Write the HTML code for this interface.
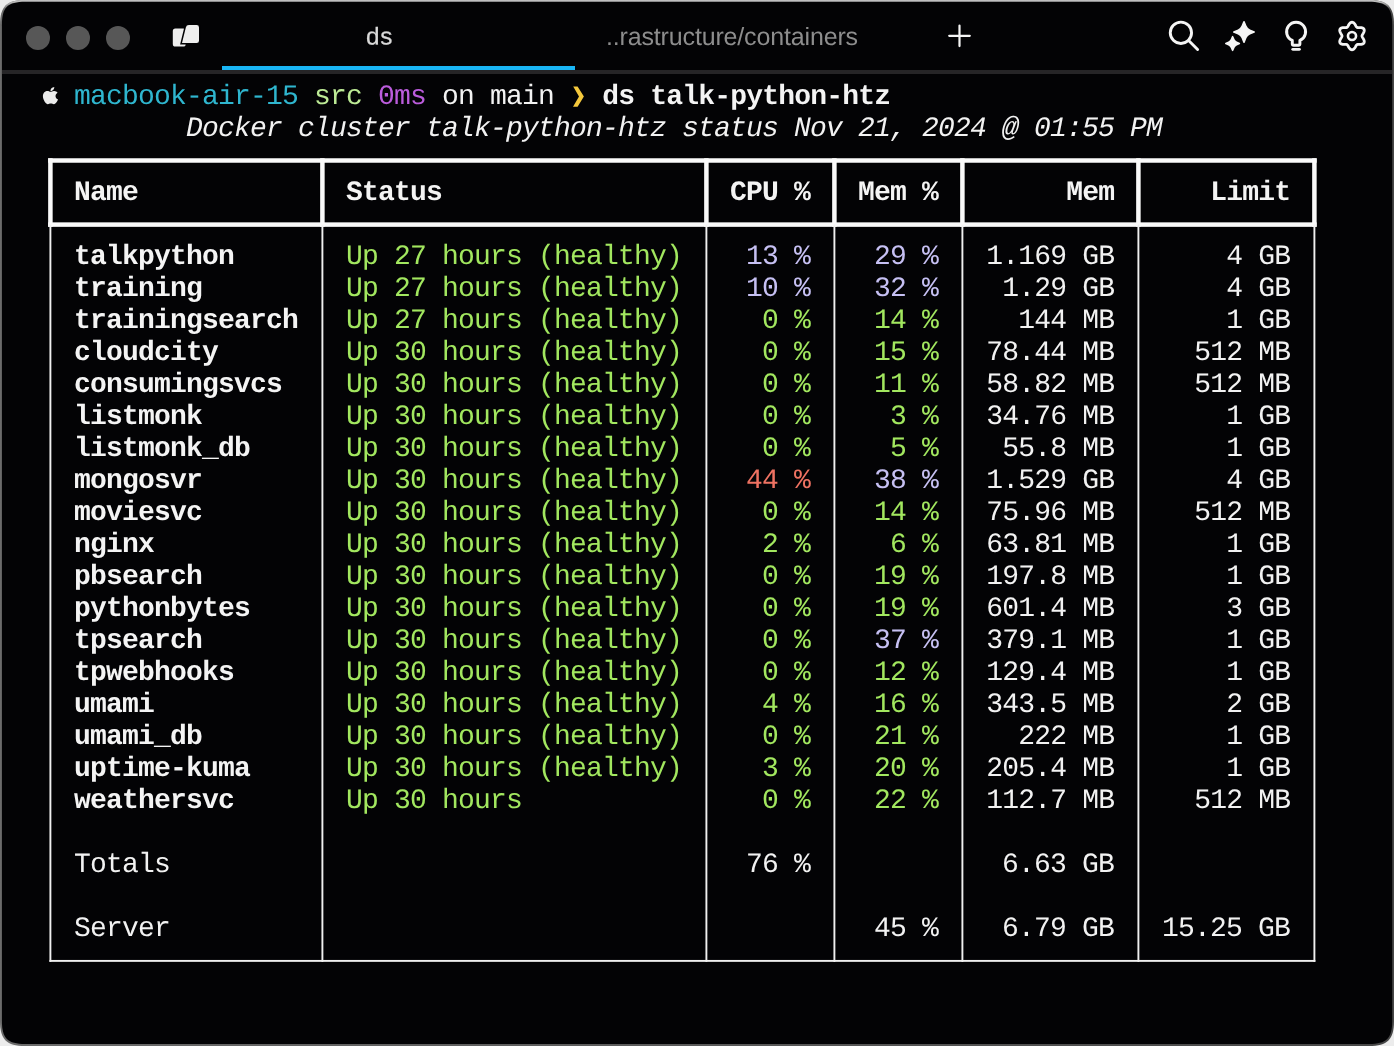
<!DOCTYPE html>
<html><head><meta charset="utf-8"><title>ds</title>
<style>
html,body{margin:0;padding:0;}
body{width:1394px;height:1046px;overflow:hidden;background:#ececec;position:relative;font-family:"Liberation Sans",sans-serif;}
.abs{position:absolute;}
.divider{left:2px;top:70px;width:1390px;height:4px;background:#262527;}
.blue{left:222px;top:66px;width:353px;height:4px;background:#19b6f6;}
.tl{width:24.4px;height:24.4px;border-radius:50%;background:#575757;top:25.8px;}
.tab1{left:279px;width:200px;top:23px;text-align:center;font-size:24.6px;line-height:28px;color:#dadada;letter-spacing:-0.3px;transform:translateZ(0);text-rendering:geometricPrecision;-webkit-text-stroke:0.25px #dadada;}
.tab2{left:606px;top:23px;font-size:25px;line-height:28px;color:#8d8d8d;white-space:nowrap;letter-spacing:-0.157px;transform:translateZ(0);text-rendering:geometricPrecision;}
pre{position:absolute;left:42px;top:82px;margin:0;font-family:"Liberation Mono",monospace;font-size:28px;letter-spacing:-0.8027px;line-height:32px;color:#f2f2f2;white-space:pre;transform:translateZ(0);text-rendering:geometricPrecision;}
pre b{font-weight:bold;color:#f4f4f4;}
pre i{font-style:italic;}
.c{color:#2fb6cf;}
.g2{color:#bdeb96;}
.m{color:#bb5cdc;}
.y{color:#f1b62e;}
.g{color:#a2e75f;}
.p{color:#c6c0f3;}
.r{color:#ee7262;}
svg{position:absolute;left:0;top:0;}
</style></head>
<body>
<svg class="winsvg" width="1394" height="1046" viewBox="0 0 1394 1046">
<defs>
<linearGradient id="gb" x1="0" y1="0" x2="1" y2="0"><stop offset="0" stop-color="#6c6c6c"/><stop offset="1" stop-color="#474747"/></linearGradient>
<linearGradient id="gt" gradientUnits="userSpaceOnUse" x1="0" y1="0" x2="0" y2="9"><stop offset="0" stop-color="#c2c2c2"/><stop offset="0.25" stop-color="#b8b8b8"/><stop offset="1" stop-color="#b8b8b8" stop-opacity="0"/></linearGradient>
<clipPath id="ct"><rect x="0" y="0" width="1394" height="9"/></clipPath>
</defs>
<path d="M25,0 H1369 C1387.5,0 1394,6.5 1394,25 V1021 C1394,1039.5 1387.5,1046 1369,1046 H25 C6.5,1046 0,1039.5 0,1021 V25 C0,6.5 6.5,0 25,0Z" fill="url(#gb)"/>
<g clip-path="url(#ct)"><path d="M25,0 H1369 C1387.5,0 1394,6.5 1394,25 V1021 C1394,1039.5 1387.5,1046 1369,1046 H25 C6.5,1046 0,1039.5 0,1021 V25 C0,6.5 6.5,0 25,0Z" fill="url(#gt)"/></g>
<path d="M25.4,1.8 H1368.7 C1386.7,1.8 1392.2,7.3 1392.2,25.3 V1020.5999999999999 C1392.2,1038.6 1386.7,1044.1 1368.7,1044.1 H25.4 C7.4,1044.1 1.9,1038.6 1.9,1020.5999999999999 V25.3 C1.9,7.3 7.4,1.8 25.4,1.8Z" fill="#030305"/>
</svg>
<div class="abs divider"></div>
<div class="abs blue"></div>
<div class="abs tl" style="left:25.8px"></div>
<div class="abs tl" style="left:65.8px"></div>
<div class="abs tl" style="left:105.8px"></div>
<svg width="1394" height="80" viewBox="0 0 1394 80" style="transform:translateZ(0)"><text x="366.1" y="44.5" fill="#dadada" stroke="#dadada" stroke-width="0.25" transform="rotate(0.05 366.1 44.5)" style="font:24.3px 'Liberation Sans',sans-serif;letter-spacing:0.55px;text-rendering:geometricPrecision">ds</text></svg>
<div class="abs tab2">..rastructure/containers</div>
<svg width="1394" height="1046" viewBox="0 0 1394 1046" fill="#fafafa">
<rect x="48.15" y="158.25" width="1268.50" height="4.50"/>
<rect x="48.15" y="222.35" width="1268.50" height="4.50"/>
<rect x="48.15" y="158.25" width="4.50" height="68.60"/>
<rect fill="#f0f0f0" x="49.45" y="224.60" width="1.90" height="737.25"/>
<rect x="320.15" y="158.25" width="4.50" height="68.60"/>
<rect fill="#f0f0f0" x="321.45" y="224.60" width="1.90" height="737.25"/>
<rect x="704.15" y="158.25" width="4.50" height="68.60"/>
<rect fill="#f0f0f0" x="705.45" y="224.60" width="1.90" height="737.25"/>
<rect x="832.15" y="158.25" width="4.50" height="68.60"/>
<rect fill="#f0f0f0" x="833.45" y="224.60" width="1.90" height="737.25"/>
<rect x="960.15" y="158.25" width="4.50" height="68.60"/>
<rect fill="#f0f0f0" x="961.45" y="224.60" width="1.90" height="737.25"/>
<rect x="1136.15" y="158.25" width="4.50" height="68.60"/>
<rect fill="#f0f0f0" x="1137.45" y="224.60" width="1.90" height="737.25"/>
<rect x="1312.15" y="158.25" width="4.50" height="68.60"/>
<rect fill="#f0f0f0" x="1313.45" y="224.60" width="1.90" height="737.25"/>
<rect fill="#f0f0f0" x="49.45" y="959.95" width="1265.90" height="1.90"/>
</svg>
<svg id="icons" width="1394" height="1046" viewBox="0 0 1394 1046">
<g fill="none" stroke="#f5f5f5" stroke-linecap="round" stroke-linejoin="round">
 <path d="M949.2,35.8H969.8M959.5,25.5V46.1" stroke-width="2.2"/>
 <circle cx="1180.9" cy="32.8" r="10.65" stroke-width="2.9"/>
 <path d="M1188.6,40.5L1197.6,49.5" stroke-width="2.9"/>
 <path d="M1292.3,40.4A9.5,9.5 0 1 1 1299.9,40.4V43.8Q1299.9,45.3 1298.4,45.3H1293.8Q1292.3,45.3 1292.3,43.8Z" stroke-width="2.95"/>
 <path d="M1292.8,49.35H1299.4" stroke-width="2.95"/>
 <path d="M1362.00,36.00 L1362.08,35.47 L1362.31,34.92 L1362.65,34.31 L1363.07,33.65 L1363.49,32.92 L1363.88,32.14 L1364.15,31.34 L1364.28,30.53 L1364.21,29.78 L1363.95,29.10 L1363.50,28.53 L1362.87,28.10 L1362.12,27.81 L1361.28,27.64 L1360.41,27.59 L1359.57,27.59 L1358.79,27.62 L1358.09,27.62 L1357.50,27.54 L1357.00,27.34 L1356.58,27.01 L1356.21,26.53 L1355.86,25.93 L1355.50,25.24 L1355.08,24.51 L1354.60,23.79 L1354.04,23.14 L1353.40,22.64 L1352.72,22.31 L1352.00,22.20 L1351.28,22.31 L1350.60,22.64 L1349.96,23.14 L1349.40,23.79 L1348.92,24.51 L1348.50,25.24 L1348.14,25.93 L1347.79,26.53 L1347.42,27.01 L1347.00,27.34 L1346.50,27.54 L1345.91,27.62 L1345.21,27.62 L1344.43,27.59 L1343.59,27.59 L1342.72,27.64 L1341.88,27.81 L1341.13,28.10 L1340.50,28.53 L1340.05,29.10 L1339.79,29.78 L1339.72,30.53 L1339.85,31.34 L1340.12,32.14 L1340.51,32.92 L1340.93,33.65 L1341.35,34.31 L1341.69,34.92 L1341.92,35.47 L1342.00,36.00 L1341.92,36.53 L1341.69,37.08 L1341.35,37.69 L1340.93,38.35 L1340.51,39.08 L1340.12,39.86 L1339.85,40.66 L1339.72,41.47 L1339.79,42.22 L1340.05,42.90 L1340.50,43.47 L1341.13,43.90 L1341.88,44.19 L1342.72,44.36 L1343.59,44.41 L1344.43,44.41 L1345.21,44.38 L1345.91,44.38 L1346.50,44.46 L1347.00,44.66 L1347.42,44.99 L1347.79,45.47 L1348.14,46.07 L1348.50,46.76 L1348.92,47.49 L1349.40,48.21 L1349.96,48.86 L1350.60,49.36 L1351.28,49.69 L1352.00,49.80 L1352.72,49.69 L1353.40,49.36 L1354.04,48.86 L1354.60,48.21 L1355.08,47.49 L1355.50,46.76 L1355.86,46.07 L1356.21,45.47 L1356.58,44.99 L1357.00,44.66 L1357.50,44.46 L1358.09,44.38 L1358.79,44.38 L1359.57,44.41 L1360.41,44.41 L1361.28,44.36 L1362.12,44.19 L1362.87,43.90 L1363.50,43.47 L1363.95,42.90 L1364.21,42.22 L1364.28,41.47 L1364.15,40.66 L1363.88,39.86 L1363.49,39.08 L1363.07,38.35 L1362.65,37.69 L1362.31,37.08 L1362.08,36.53Z" stroke-width="2.8"/>
 <circle cx="1352" cy="36" r="4.05" stroke-width="2.6"/>
</g>
<g fill="#f5f5f5" stroke="#f5f5f5" stroke-width="1.7" stroke-linejoin="round">
 <path d="M1244.00,21.80 L1245.74,26.15 Q1246.90,29.05 1249.80,30.21 L1254.15,31.95 L1249.80,33.69 Q1246.90,34.85 1245.74,37.75 L1244.00,42.10 L1242.26,37.75 Q1241.10,34.85 1238.20,33.69 L1233.85,31.95 L1238.20,30.21 Q1241.10,29.05 1242.26,26.15 L1244.00,21.80Z"/>
 <path d="M1232.60,36.75 L1233.80,39.60 Q1234.60,41.50 1236.50,42.30 L1239.35,43.50 L1236.50,44.70 Q1234.60,45.50 1233.80,47.40 L1232.60,50.25 L1231.40,47.40 Q1230.60,45.50 1228.70,44.70 L1225.85,43.50 L1228.70,42.30 Q1230.60,41.50 1231.40,39.60 L1232.60,36.75Z"/>
</g>
<g>
 <rect x="172.8" y="28.5" width="12.9" height="18.1" rx="2.6" fill="#efefef"/>
 <path d="M188.9,25.1H196.6Q199,25.1 199,27.5V40.7Q199,43.1 196.6,43.1H182.0L185.9,27.2Q186.4,25.1 188.9,25.1Z" fill="#efefef" stroke="#030305" stroke-width="3" paint-order="stroke fill"/>
</g>
<path fill="#f4c83c" d="M573.2,86.4H577.6L583.9,96.55L577.6,106.7H573.0L579.0,96.55Z"/>
<g transform="translate(42.75,85.65) scale(0.0402,0.0386)" fill="#ebebeb"><path d="M318.7 268.7c-.2-36.7 16.4-64.4 50-84.8-18.8-26.9-47.2-41.7-84.7-44.6-35.5-2.8-74.3 20.7-88.5 20.7-15 0-49.4-19.7-76.4-19.7C63.3 141.2 4 184.8 4 273.5q0 39.3 14.4 81.2c12.8 36.7 59 126.7 107.2 125.2 25.2-.6 43-17.9 75.8-17.9 31.8 0 48.3 17.9 76.4 17.9 48.6-.7 90.4-82.5 102.6-119.3-65.2-30.7-61.7-90-61.7-91.9zm-56.6-164.2c27.3-32.4 24.8-61.9 24-72.5-24.1 1.4-52 16.4-67.9 34.9-17.5 19.8-27.8 44.3-25.6 71.9 26.1 2 49.9-11.4 69.5-34.3z"/></g>
</svg>
<pre><span class="ap"> </span> <span class="c">macbook-air-15</span> <span class="g2">src</span> <span class="m">0ms</span> on main <span class="y"> </span> <b>ds talk-python-htz</b>
         <i>Docker cluster talk-python-htz status Nov 21, 2024 @ 01:55 PM</i>

  <b>Name</b>             <b>Status</b>                  <b>CPU %</b>   <b>Mem %</b>        <b>Mem</b>      <b>Limit</b> 

  <b>talkpython</b>       <span class="g">Up 27 hours (healthy)</span>    <span class="p">13 %</span>    <span class="p">29 %</span>   1.169 GB       4 GB 
  <b>training</b>         <span class="g">Up 27 hours (healthy)</span>    <span class="p">10 %</span>    <span class="p">32 %</span>    1.29 GB       4 GB 
  <b>trainingsearch</b>   <span class="g">Up 27 hours (healthy)</span>     <span class="g">0 %</span>    <span class="g">14 %</span>     144 MB       1 GB 
  <b>cloudcity</b>        <span class="g">Up 30 hours (healthy)</span>     <span class="g">0 %</span>    <span class="g">15 %</span>   78.44 MB     512 MB 
  <b>consumingsvcs</b>    <span class="g">Up 30 hours (healthy)</span>     <span class="g">0 %</span>    <span class="g">11 %</span>   58.82 MB     512 MB 
  <b>listmonk</b>         <span class="g">Up 30 hours (healthy)</span>     <span class="g">0 %</span>     <span class="g">3 %</span>   34.76 MB       1 GB 
  <b>listmonk_db</b>      <span class="g">Up 30 hours (healthy)</span>     <span class="g">0 %</span>     <span class="g">5 %</span>    55.8 MB       1 GB 
  <b>mongosvr</b>         <span class="g">Up 30 hours (healthy)</span>    <span class="r">44 %</span>    <span class="p">38 %</span>   1.529 GB       4 GB 
  <b>moviesvc</b>         <span class="g">Up 30 hours (healthy)</span>     <span class="g">0 %</span>    <span class="g">14 %</span>   75.96 MB     512 MB 
  <b>nginx</b>            <span class="g">Up 30 hours (healthy)</span>     <span class="g">2 %</span>     <span class="g">6 %</span>   63.81 MB       1 GB 
  <b>pbsearch</b>         <span class="g">Up 30 hours (healthy)</span>     <span class="g">0 %</span>    <span class="g">19 %</span>   197.8 MB       1 GB 
  <b>pythonbytes</b>      <span class="g">Up 30 hours (healthy)</span>     <span class="g">0 %</span>    <span class="g">19 %</span>   601.4 MB       3 GB 
  <b>tpsearch</b>         <span class="g">Up 30 hours (healthy)</span>     <span class="g">0 %</span>    <span class="p">37 %</span>   379.1 MB       1 GB 
  <b>tpwebhooks</b>       <span class="g">Up 30 hours (healthy)</span>     <span class="g">0 %</span>    <span class="g">12 %</span>   129.4 MB       1 GB 
  <b>umami</b>            <span class="g">Up 30 hours (healthy)</span>     <span class="g">4 %</span>    <span class="g">16 %</span>   343.5 MB       2 GB 
  <b>umami_db</b>         <span class="g">Up 30 hours (healthy)</span>     <span class="g">0 %</span>    <span class="g">21 %</span>     222 MB       1 GB 
  <b>uptime-kuma</b>      <span class="g">Up 30 hours (healthy)</span>     <span class="g">3 %</span>    <span class="g">20 %</span>   205.4 MB       1 GB 
  <b>weathersvc</b>       <span class="g">Up 30 hours</span>               <span class="g">0 %</span>    <span class="g">22 %</span>   112.7 MB     512 MB 

  Totals                                    76 %            6.63 GB            

  Server                                            45 %    6.79 GB   15.25 GB </pre>
</body></html>
